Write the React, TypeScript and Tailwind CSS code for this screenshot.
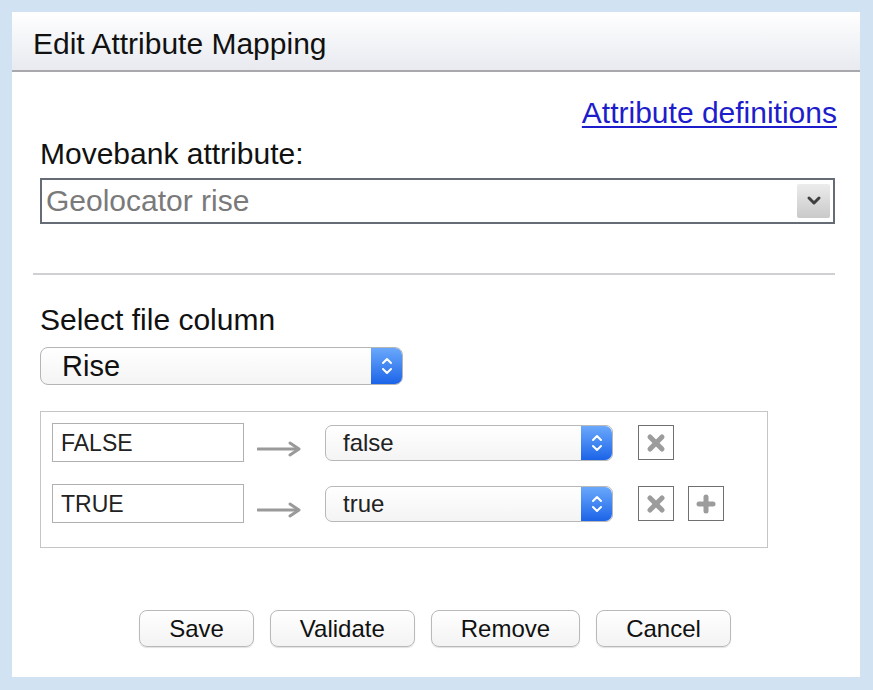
import React from 'react';

const font = { fontFamily: '"Liberation Sans", Arial, Helvetica, sans-serif' };

function Stepper() {
  return (
    <div className="flex h-full w-[31px] items-center justify-center rounded-r-[7px] bg-gradient-to-b from-[#6aa8fb] to-[#1b63e8]">
      <svg width="12" height="20" viewBox="0 0 12 20" fill="none" stroke="#fff" strokeWidth="2" strokeLinecap="round" strokeLinejoin="round">
        <polyline points="2,7 6,3 10,7" />
        <polyline points="2,13 6,17 10,13" />
      </svg>
    </div>
  );
}

function Arrow() {
  return (
    <svg width="44" height="16" viewBox="0 0 44 16" fill="none" stroke="#9a9a9a" strokeWidth="3" strokeLinecap="round" strokeLinejoin="round">
      <line x1="1" y1="8" x2="41" y2="8" />
      <polyline points="33,2 42,8 33,14" />
    </svg>
  );
}

function IconButton({ kind }: { kind: 'remove' | 'add' }) {
  return (
    <div className="flex h-[35px] w-[36px] items-center justify-center border border-[#707070] bg-white">
      <svg width="20" height="20" viewBox="0 0 20 20" fill="none" stroke="#9c9c9c" strokeWidth="5" strokeLinecap="round">
        {kind === 'remove' ? (
          <>
            <line x1="4" y1="4" x2="16" y2="16" />
            <line x1="16" y1="4" x2="4" y2="16" />
          </>
        ) : (
          <>
            <line x1="10" y1="3" x2="10" y2="17" />
            <line x1="3" y1="10" x2="17" y2="10" />
          </>
        )}
      </svg>
    </div>
  );
}

function MappingRow({ from, to, last }: { from: string; to: string; last?: boolean }) {
  return (
    <div className="flex items-center">
      <div className="flex h-[39px] w-[192px] items-center border border-[#b0b0b0] pl-[8px] text-[23px] text-[#222]">
        {from}
      </div>
      <div className="ml-[13px] mt-[12px]">
        <Arrow />
      </div>
      <div className="ml-[24px] flex h-[36px] w-[288px] items-stretch rounded-[7px] border border-[#b8b8b8] bg-gradient-to-b from-white to-[#f4f4f4]">
        <div className="flex flex-1 items-center pl-[17px] text-[24px] text-[#222]">{to}</div>
        <Stepper />
      </div>
      <div className="ml-[25px]">
        <IconButton kind="remove" />
      </div>
      {last && (
        <div className="ml-[14px]">
          <IconButton kind="add" />
        </div>
      )}
    </div>
  );
}

function Btn({ label }: { label: string }) {
  return (
    <button className="h-[37px] rounded-[8px] border border-[#b9b9b9] bg-gradient-to-b from-white to-[#f3f3f3] px-[29px] text-[24px] leading-none text-[#111] shadow-[0_1px_1px_rgba(0,0,0,0.12)]">
      {label}
    </button>
  );
}

export default function App() {
  return (
    <div style={font} className="h-[690px] w-[873px] bg-[#d1e2f3] pb-[13px] pl-[12px] pr-[13px] pt-[12px]">
      <div className="flex h-full flex-col bg-white">
        {/* Header */}
        <div className="h-[60px] border-b-2 border-[#a9a9ad] bg-gradient-to-b from-white to-[#e8eaf0] pl-[21px] pt-[15px]">
          <div className="text-[30px] leading-[34px] text-[#111]">Edit Attribute Mapping</div>
        </div>

        {/* Body */}
        <div className="flex flex-col pl-[28px] pr-[23px] text-[30px] leading-[34px] text-[#111]">
          <div className="mt-[24px] text-right">
            <a href="#" className="text-[#1d1dcc] underline decoration-[2px] underline-offset-[3px]">
              Attribute definitions
            </a>
          </div>
          <div className="mt-[7px]">Movebank attribute:</div>
          <div className="mr-[2px] mt-[7px] flex h-[46px] items-center justify-between border-2 border-[#666c75] pl-[4px] pr-[3px]">
            <span className="text-[#7a7a7a]">Geolocator rise</span>
            <div className="flex h-[34px] w-[33px] items-center justify-center rounded-[2px] bg-gradient-to-b from-[#ececec] to-[#c9c9c9]">
              <svg width="16" height="12" viewBox="0 0 16 12" fill="none" stroke="#3f3f3f" strokeWidth="3" strokeLinecap="round" strokeLinejoin="round">
                <polyline points="3,3 8,8 13,3" />
              </svg>
            </div>
          </div>

          <div className="-ml-[7px] mr-[2px] mt-[49px] h-[2px] bg-[#cfcfd4]" />

          <div className="mt-[28px]">Select file column</div>
          <div className="mt-[10px] flex h-[38px] w-[363px] items-stretch rounded-[8px] border border-[#b5b5b5] bg-gradient-to-b from-white to-[#f4f4f4]">
            <div className="flex flex-1 items-center pl-[21px] text-[29px]">Rise</div>
            <Stepper />
          </div>

          <div className="mt-[26px] flex w-[728px] flex-col gap-[22px] border border-[#c5c5c5] pb-[24px] pl-[11px] pt-[11px]">
            <MappingRow from="FALSE" to="false" />
            <MappingRow from="TRUE" to="true" last />
          </div>

          <div className="mt-[62px] flex justify-center gap-[16px] pr-[7px]">
            <Btn label="Save" />
            <Btn label="Validate" />
            <Btn label="Remove" />
            <Btn label="Cancel" />
          </div>
        </div>
      </div>
    </div>
  );
}
